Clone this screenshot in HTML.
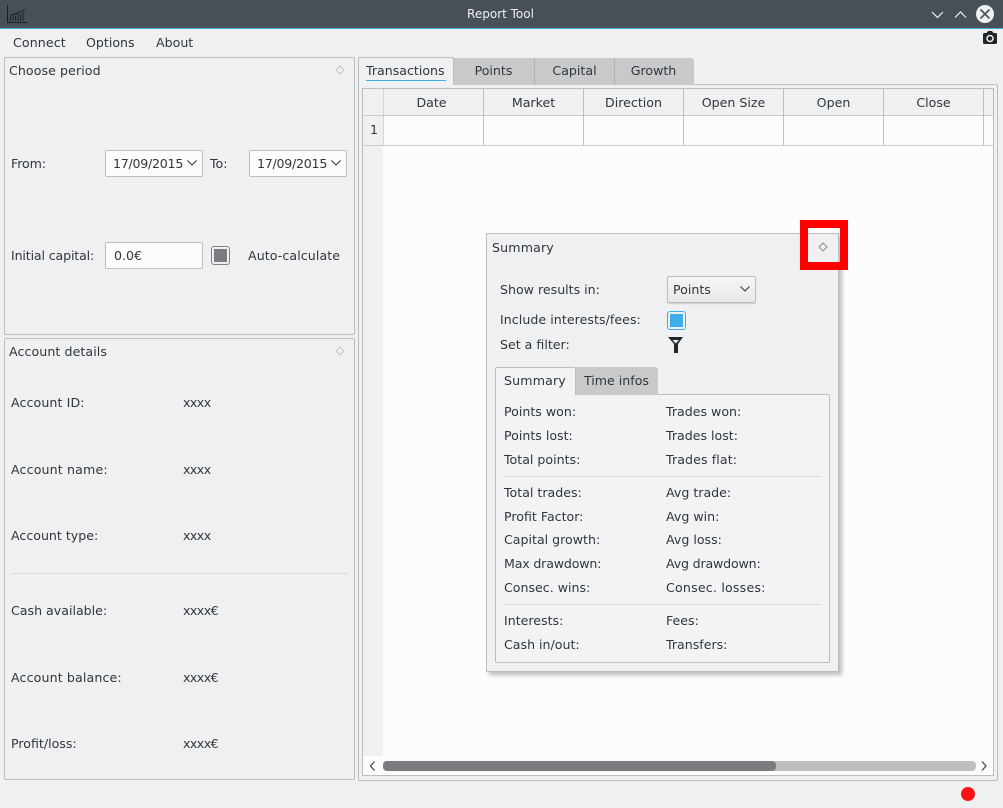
<!DOCTYPE html>
<html><head><meta charset="utf-8"><title>Report Tool</title>
<style>
html,body{margin:0;padding:0;background:#eff0f1}
#r{position:relative;width:1003px;height:808px;overflow:hidden;background:#eff0f1;font-family:"DejaVu Sans","Liberation Sans",sans-serif;font-size:12.6px;color:#31363b}
#r div,#r span,#r svg{position:absolute}
.t{line-height:16px;height:16px;white-space:nowrap;margin-top:1px}
.n{margin-top:0}
.x{letter-spacing:-.55px;margin-top:0}
.b{box-sizing:border-box;border:1px solid #bcbebf;border-radius:2px}
.c{text-align:center}
.w{background:#fcfcfc}
.h{background:#bcbebf}
.tab{background:#c8c9ca;box-sizing:border-box;text-align:center;line-height:25px;height:27px;top:58px;border-right:1px solid #aeb0b1;border-radius:0}
</style></head><body><div id="r">

<!-- title bar -->
<div style="left:0;top:0;width:1003px;height:28px;background:#475057"></div>
<div style="left:0;top:28px;width:1003px;height:1px;background:#3daee9"></div>
<svg style="left:6px;top:4px" width="22" height="20" viewBox="0 0 22 20" fill="none" stroke="#1d2226" stroke-width="1"><path d="M1.500 1V18.500H21"/><path d="M4.500 17V12M7 17V11M9.500 17V12M12 17V9M14.500 17V10M17 17V8M4 11L9 10L13 8L19 6"/></svg>
<div class="t c n" style="left:-1px;top:6px;width:1003px;color:#eff0f1;font-size:12px">Report Tool</div>
<svg style="left:925px;top:3px" width="78" height="24" viewBox="0 0 78 24" fill="none"><path d="M7 9L12.500 14.500L18 9" stroke="#eff0f1" stroke-width="1.200"/><path d="M30 14.500L35.500 9L41 14.500" stroke="#eff0f1" stroke-width="1.200"/><circle cx="60" cy="11" r="9" fill="#eff0f1"/><path d="M55.500 6.500L64.500 15.500M64.500 6.500L55.500 15.500" stroke="#475057" stroke-width="1.600"/></svg>

<!-- menu -->
<div class="t" style="left:13px;top:34px;letter-spacing:.1px">Connect</div>
<div class="t" style="left:86px;top:34px">Options</div>
<div class="t" style="left:156px;top:34px">About</div>
<svg style="left:982px;top:30px" width="16" height="15" viewBox="0 0 16 15"><path d="M1 4.500Q1 3 2.500 3H4.500L6 1H10L11.500 3H13.500Q15 3 15 4.500V12.500Q15 14 13.500 14H2.500Q1 14 1 12.500Z" fill="#232629"/><circle cx="8" cy="8.500" r="3" fill="none" stroke="#eff0f1" stroke-width="1.500"/></svg>

<!-- choose period -->
<div class="b" style="left:4px;top:57px;width:351px;height:278px"></div>
<div class="t" style="left:9px;top:62px;letter-spacing:.08px">Choose period</div>
<svg style="left:334px;top:64px" width="12" height="12" viewBox="0 0 12 12"><path d="M6 2L10 6L6 10L2 6Z" fill="none" stroke="#c4c6c7"/></svg>
<div class="t" style="left:11px;top:155px;letter-spacing:-.1px">From:</div>
<div class="b w" style="left:105px;top:150px;width:98px;height:27px"></div>
<div class="t" style="left:113px;top:155px;letter-spacing:-.25px">17/09/2015</div>
<svg style="left:186px;top:158px" width="12" height="10" viewBox="0 0 12 10"><path d="M1.500 2.500L6 7L10.500 2.500" fill="none" stroke="#31363b" stroke-width="1.100"/></svg>
<div class="t" style="left:210px;top:155px">To:</div>
<div class="b w" style="left:249px;top:150px;width:98px;height:27px"></div>
<div class="t" style="left:257px;top:155px;letter-spacing:-.25px">17/09/2015</div>
<svg style="left:330px;top:158px" width="12" height="10" viewBox="0 0 12 10"><path d="M1.500 2.500L6 7L10.500 2.500" fill="none" stroke="#31363b" stroke-width="1.100"/></svg>
<div class="t" style="left:11px;top:247px;letter-spacing:-.14px">Initial capital:</div>
<div class="b w" style="left:105px;top:242px;width:98px;height:27px"></div>
<div class="t" style="left:114px;top:247px">0.0€</div>
<div class="b" style="left:211px;top:246px;width:19px;height:19px;border-color:#7f8283;border-radius:3px;background:#eff0f1"></div>
<div style="left:214px;top:249px;width:13px;height:13px;background:#7a7c7f"></div>
<div class="t" style="left:248px;top:247px;letter-spacing:.08px">Auto-calculate</div>

<!-- account details -->
<div class="b" style="left:4px;top:338px;width:351px;height:442px"></div>
<div class="t" style="left:9px;top:343px;letter-spacing:.08px">Account details</div>
<svg style="left:334px;top:345px" width="12" height="12" viewBox="0 0 12 12"><path d="M6 2L10 6L6 10L2 6Z" fill="none" stroke="#c4c6c7"/></svg>
<div class="t" style="left:11px;top:394px;letter-spacing:.1px">Account ID:</div><div class="t x" style="left:183px;top:395px">xxxx</div>
<div class="t" style="left:11px;top:461px;letter-spacing:.15px">Account name:</div><div class="t x" style="left:183px;top:462px">xxxx</div>
<div class="t" style="left:11px;top:527px">Account type:</div><div class="t x" style="left:183px;top:528px">xxxx</div>
<div style="left:11px;top:573px;width:337px;height:1px;background:#d9dadb"></div>
<div class="t" style="left:11px;top:602px">Cash available:</div><div class="t x" style="left:183px;top:603px">xxxx€</div>
<div class="t" style="left:11px;top:669px;letter-spacing:.13px">Account balance:</div><div class="t x" style="left:183px;top:670px">xxxx€</div>
<div class="t" style="left:11px;top:735px">Profit/loss:</div><div class="t x" style="left:183px;top:736px">xxxx€</div>

<!-- right tab pane -->
<div class="b" style="left:358px;top:84px;width:640px;height:697px"></div>
<div class="tab" style="left:454px;width:81px;text-indent:-1px">Points</div>
<div class="tab" style="left:535px;width:80px">Capital</div>
<div class="tab" style="left:615px;width:79px;border-right:0;border-top-right-radius:3px;text-indent:-2px">Growth</div>
<div style="left:358px;top:57px;width:96px;height:28px;box-sizing:border-box;border:1px solid #bcbebf;border-bottom:0;background:#eff0f1;border-radius:2px 2px 0 0"></div>
<div class="t" style="left:366px;top:62px">Transactions</div>
<div style="left:366px;top:80px;width:80px;height:1px;background:#3daee9"></div>

<!-- table -->
<div class="b w" style="left:362px;top:88px;width:632px;height:688px;border-radius:0"></div>
<div style="left:363px;top:89px;width:630px;height:26px;background:#eff0f1"></div>
<div style="left:363px;top:115px;width:630px;height:1px;background:#c9cacb"></div>
<div style="left:363px;top:116px;width:20px;height:640px;background:#eff0f1"></div>
<div style="left:383px;top:89px;width:1px;height:57px;background:#d4d5d6"></div>
<div style="left:363px;top:145px;width:630px;height:1px;background:#c9cacb"></div>
<div class="h" style="left:483px;top:89px;width:1px;height:56px"></div>
<div class="h" style="left:583px;top:89px;width:1px;height:56px"></div>
<div class="h" style="left:683px;top:89px;width:1px;height:56px"></div>
<div class="h" style="left:783px;top:89px;width:1px;height:56px"></div>
<div class="h" style="left:883px;top:89px;width:1px;height:56px"></div>
<div class="h" style="left:983px;top:89px;width:1px;height:56px"></div>
<div class="t c" style="left:382px;top:94px;width:99px">Date</div>
<div class="t c" style="left:484px;top:94px;width:99px">Market</div>
<div class="t c" style="left:584px;top:94px;width:99px">Direction</div>
<div class="t c" style="left:684px;top:94px;width:99px">Open Size</div>
<div class="t c" style="left:784px;top:94px;width:99px">Open</div>
<div class="t c" style="left:884px;top:94px;width:99px">Close</div>
<div class="t n" style="left:370px;top:122px">1</div>

<!-- scrollbar -->
<div style="left:383px;top:761px;width:593px;height:10px;background:#bcbebf;border-radius:4px"></div>
<div style="left:383px;top:761px;width:393px;height:10px;background:#7a7c7f;border-radius:4px"></div>
<svg style="left:368px;top:760px" width="10" height="12" viewBox="0 0 10 12"><path d="M6.500 1.500L2.500 6L6.500 10.500" fill="none" stroke="#31363b" stroke-width="1.100"/></svg>
<svg style="left:979px;top:760px" width="10" height="12" viewBox="0 0 10 12"><path d="M3 1.500L7 6L3 10.500" fill="none" stroke="#31363b" stroke-width="1.100"/></svg>

<!-- status -->
<div style="left:961px;top:787px;width:14px;height:14px;border-radius:50%;background:#f81414"></div>

<!-- summary dock -->
<div style="left:486px;top:233px;width:353px;height:439px;box-sizing:border-box;border:1px solid #bcbebf;background:#eff0f1;box-shadow:3px 3px 4px rgba(0,0,0,.25)"></div>
<div class="t n" style="left:492px;top:240px;letter-spacing:.15px">Summary</div>
<div style="left:800px;top:220px;width:48px;height:50px;box-sizing:border-box;border:8px solid #fe0000"></div>
<svg style="left:817px;top:241px" width="12" height="12" viewBox="0 0 12 12"><path d="M6 2L10 6L6 10L2 6Z" fill="none" stroke="#8e9091"/></svg>
<div class="t" style="left:500px;top:281px">Show results in:</div>
<div class="b" style="left:667px;top:276px;width:89px;height:27px;background:linear-gradient(#f4f5f5,#e8e9ea);box-shadow:0 1px 1px rgba(0,0,0,.15)"></div>
<div class="t" style="left:673px;top:281px">Points</div>
<svg style="left:739px;top:284px" width="12" height="10" viewBox="0 0 12 10"><path d="M1.500 2.500L6 7L10.500 2.500" fill="none" stroke="#31363b" stroke-width="1.100"/></svg>
<div class="t n" style="left:500px;top:312px;letter-spacing:.05px">Include interests/fees:</div>
<div class="b" style="left:667px;top:311px;width:19px;height:19px;border-color:#3daee9;border-radius:3px;background:#eff0f1"></div>
<div style="left:670px;top:314px;width:13px;height:13px;background:#3daee9"></div>
<div class="t" style="left:500px;top:336px">Set a filter:</div>
<svg style="left:667px;top:336px" width="17" height="18" viewBox="0 0 17 18"><path d="M1 1H16L11 8V17H7V8Z" fill="#232629"/><path d="M5.500 4H12L8.700 7.500Z" fill="#eff0f1"/></svg>

<div class="b" style="left:495px;top:394px;width:335px;height:269px;background:#f2f3f5"></div>
<div style="left:576px;top:367px;width:82px;height:28px;background:#c8c9ca;border-radius:0 3px 0 0"></div>
<div class="t c" style="left:576px;top:372px;width:81px">Time infos</div>
<div style="left:495px;top:367px;width:81px;height:28px;box-sizing:border-box;border:1px solid #bcbebf;border-bottom:0;background:#f2f3f5;border-radius:2px 2px 0 0"></div>
<div class="t" style="left:504px;top:372px;letter-spacing:.15px">Summary</div>

<div class="t" style="left:504px;top:403px">Points won:</div><div class="t" style="left:666px;top:403px">Trades won:</div>
<div class="t" style="left:504px;top:427px">Points lost:</div><div class="t" style="left:666px;top:427px">Trades lost:</div>
<div class="t" style="left:504px;top:451px">Total points:</div><div class="t" style="left:666px;top:451px;letter-spacing:.1px">Trades flat:</div>
<div style="left:504px;top:476px;width:317px;height:1px;background:#d9dadb"></div>
<div class="t" style="left:504px;top:484px">Total trades:</div><div class="t" style="left:666px;top:484px">Avg trade:</div>
<div class="t" style="left:504px;top:508px">Profit Factor:</div><div class="t" style="left:666px;top:508px">Avg win:</div>
<div class="t" style="left:504px;top:531px">Capital growth:</div><div class="t" style="left:666px;top:531px">Avg loss:</div>
<div class="t" style="left:504px;top:555px;letter-spacing:-.17px">Max drawdown:</div><div class="t" style="left:666px;top:555px;letter-spacing:-.17px">Avg drawdown:</div>
<div class="t" style="left:504px;top:579px">Consec. wins:</div><div class="t" style="left:666px;top:579px;letter-spacing:.2px">Consec. losses:</div>
<div style="left:504px;top:604px;width:317px;height:1px;background:#d9dadb"></div>
<div class="t" style="left:504px;top:612px">Interests:</div><div class="t" style="left:666px;top:612px">Fees:</div>
<div class="t" style="left:504px;top:636px">Cash in/out:</div><div class="t" style="left:666px;top:636px">Transfers:</div>

</div></body></html>
